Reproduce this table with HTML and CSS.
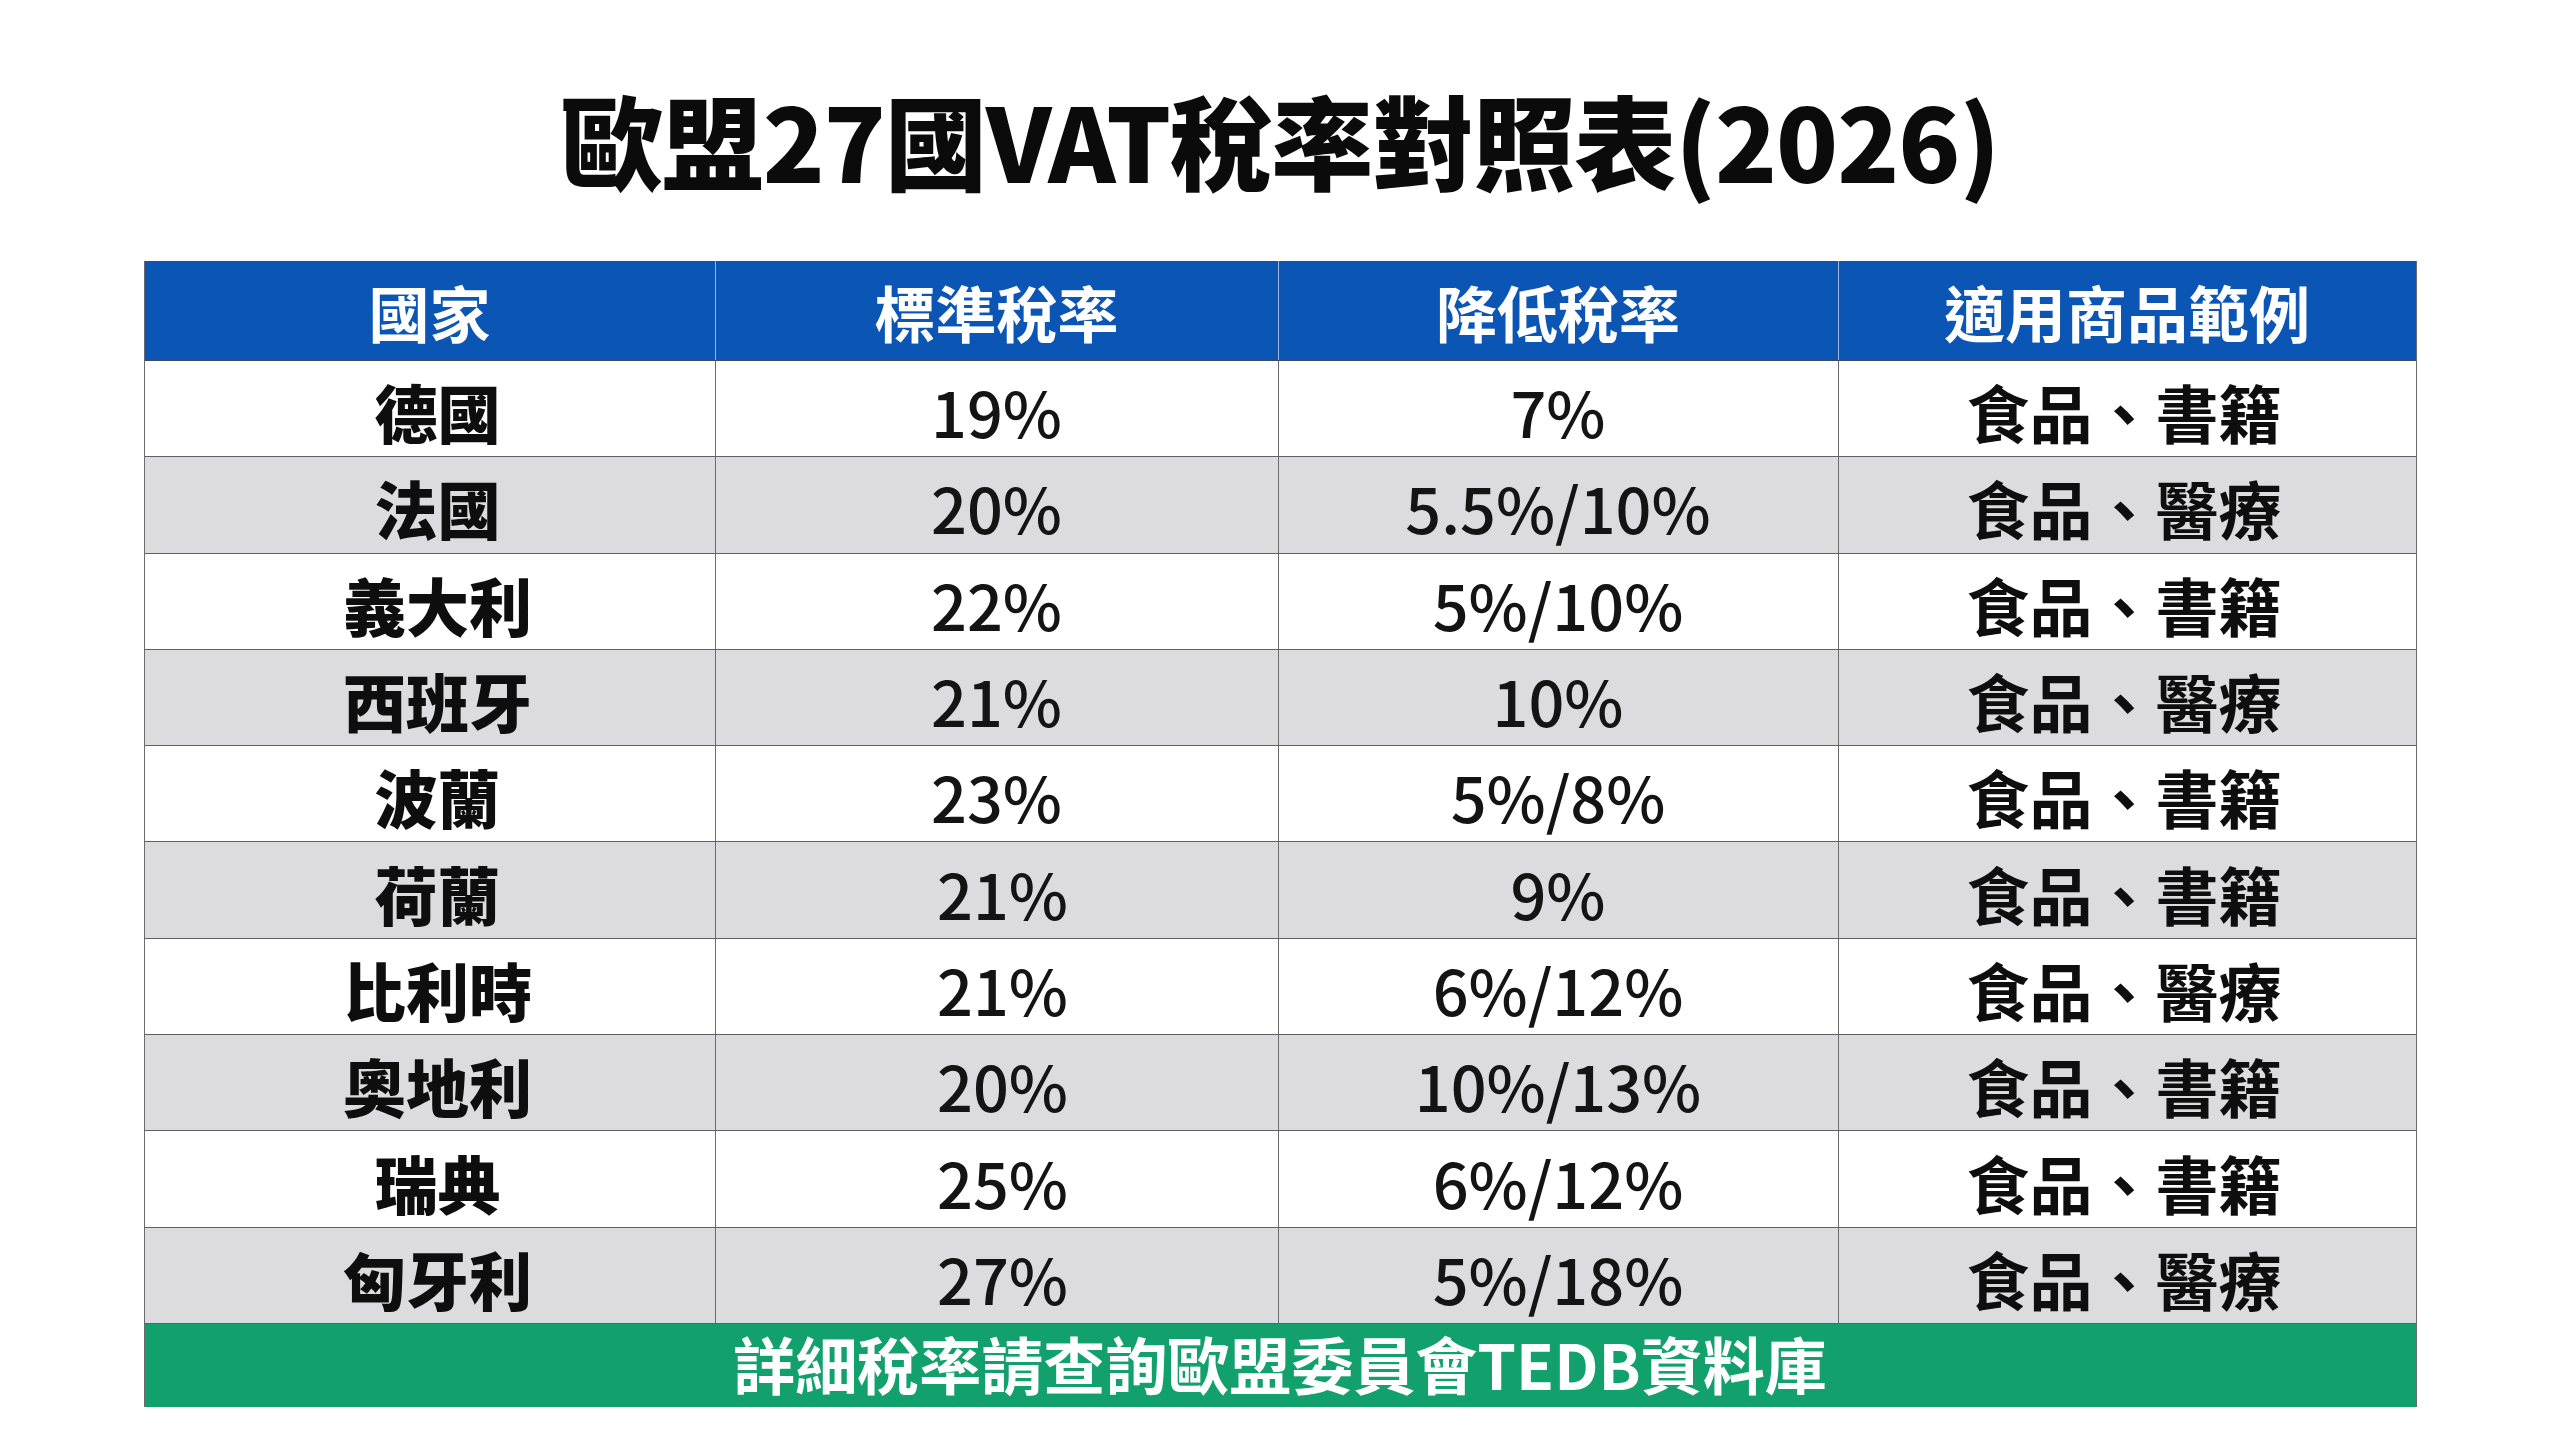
FILE: index.html
```html
<!DOCTYPE html>
<html lang="zh-Hant">
<head>
<meta charset="utf-8">
<title>歐盟27國VAT稅率對照表(2026)</title>
<link rel="stylesheet" href="styles.css">
</head>
<body>
<div class="page">
  <h1 class="title">歐盟27國VAT稅率對照表(2026)</h1>
  <div class="table">
    <div class="row head">
      <div class="cell">國家</div>
      <div class="cell">標準稅率</div>
      <div class="cell">降低稅率</div>
      <div class="cell">適用商品範例</div>
    </div>
    <div class="row">
      <div class="cell name">德國</div><div class="cell num">19%</div><div class="cell num">7%</div><div class="cell cat">食品、書籍</div>
    </div>
    <div class="row alt">
      <div class="cell name">法國</div><div class="cell num">20%</div><div class="cell num">5.5%/10%</div><div class="cell cat">食品、醫療</div>
    </div>
    <div class="row">
      <div class="cell name">義大利</div><div class="cell num">22%</div><div class="cell num">5%/10%</div><div class="cell cat">食品、書籍</div>
    </div>
    <div class="row alt">
      <div class="cell name">西班牙</div><div class="cell num">21%</div><div class="cell num">10%</div><div class="cell cat">食品、醫療</div>
    </div>
    <div class="row">
      <div class="cell name">波蘭</div><div class="cell num">23%</div><div class="cell num">5%/8%</div><div class="cell cat">食品、書籍</div>
    </div>
    <div class="row alt">
      <div class="cell name">荷蘭</div><div class="cell num shift">21%</div><div class="cell num">9%</div><div class="cell cat">食品、書籍</div>
    </div>
    <div class="row">
      <div class="cell name">比利時</div><div class="cell num shift">21%</div><div class="cell num">6%/12%</div><div class="cell cat">食品、醫療</div>
    </div>
    <div class="row alt">
      <div class="cell name">奧地利</div><div class="cell num shift">20%</div><div class="cell num">10%/13%</div><div class="cell cat">食品、書籍</div>
    </div>
    <div class="row">
      <div class="cell name">瑞典</div><div class="cell num shift">25%</div><div class="cell num">6%/12%</div><div class="cell cat">食品、書籍</div>
    </div>
    <div class="row alt">
      <div class="cell name">匈牙利</div><div class="cell num shift">27%</div><div class="cell num">5%/18%</div><div class="cell cat">食品、醫療</div>
    </div>
    <div class="foot">詳細稅率請查詢歐盟委員會TEDB資料庫</div>
  </div>
</div>
</body>
</html>
```

FILE: styles.css
```css
html, body {
  margin: 0;
  padding: 0;
  background: #ffffff;
}
body {
  font-family: "Noto Sans CJK TC", "Noto Sans", sans-serif;
  color: #111;
}
.page {
  width: 2560px;
  height: 1429px;
  display: flex;
  flex-direction: column;
  align-items: center;
}
.title {
  margin: 0;
  height: 261px;
  box-sizing: border-box;
  padding-top: 88px;
  font-size: 102px;
  line-height: 1;
  font-weight: 900;
  color: #0b0b0b;
  letter-spacing: -1px;
  display: flex;
  align-items: flex-start;
}
.table {
  width: 2271px;
  display: flex;
  flex-direction: column;
  border-left: 1px solid #6a6a70;
  border-right: 1px solid #6a6a70;
}
.row {
  display: grid;
  grid-template-columns: 571px 563px 560px 1fr;
  height: 96.3px;
  background: #ffffff;
  border-bottom: 1.5px solid #5f6066;
  box-sizing: border-box;
}
.row.alt {
  background: #dcdcde;
}
.row.head {
  height: 100px;
  background: #0b55b5;
  color: #ffffff;
  border-bottom: 1.5px solid #3d4a66;
}
.cell {
  display: flex;
  align-items: center;
  justify-content: center;
  border-right: 1.5px solid #6a6a70;
  font-size: 60px;
  font-weight: 700;
  line-height: 1;
  padding-top: 4px;
  box-sizing: border-box;
}
.cell:last-child {
  border-right: none;
}
.head .cell {
  font-size: 61px;
  font-weight: 700;
  border-right-color: #9fb4d8;
  padding-top: 2px;
}
.cell.name {
  color: #0e0e0e;
  font-size: 63px;
  font-weight: 900;
  padding-left: 16px;
}
.cell.num {
  font-weight: 500;
  font-size: 63px;
  color: #141414;
}
.cell.num.shift {
  padding-left: 12px;
}
.cell.cat {
  color: #0e0e0e;
  font-size: 63px;
  padding-right: 6px;
}
.foot {
  height: 83px;
  background: #12a06c;
  color: #ffffff;
  font-size: 62px;
  font-weight: 700;
  line-height: 1;
  display: flex;
  align-items: center;
  justify-content: center;
  padding-bottom: 4px;
  box-sizing: border-box;
}
```
